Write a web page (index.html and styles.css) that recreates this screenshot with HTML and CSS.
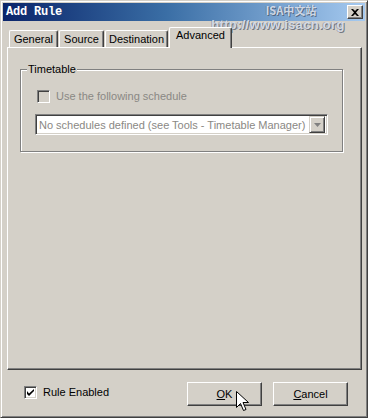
FILE: index.html
```html
<!DOCTYPE html>
<html>
	<head>
		<meta charset="UTF-8">
		<title>Add Rule</title>
		<link rel="stylesheet" href="styles.css">
	</head>
	<body>
		<div class="window">
			<div class="titlebar">
				<span class="title">Add Rule</span>
				<span class="close">
					<svg width="8" height="7" viewBox="0 0 8 7"><path d="M0 0h2l2 2 2-2h2L5 3.5 8 7H6L4 5 2 7H0l3-3.5z" fill="#000"/></svg>
				</span>
			</div>
			<div class="body">
				<div class="tabs">
					<div class="tab tab-general">General</div>
					<div class="tab tab-source">Source</div>
					<div class="tab tab-dest">Destination</div>
					<div class="tab tab-adv active">Advanced</div>
				</div>
				<div class="panel">
					<div class="group">
						<span class="legend">Timetable</span>
						<div class="check disabled">
							<span class="box"></span>
							<span>Use the following schedule</span>
						</div>
						<div class="combo">
							<span class="combo-text">No schedules defined (see Tools - Timetable Manager)</span>
							<span class="combo-btn">
								<svg width="7" height="4" viewBox="0 0 7 4"><path d="M0 0h7L3.5 4z" fill="#808080"/></svg>
							</span>
						</div>
					</div>
				</div>
				<div class="footer">
					<div class="check">
						<span class="box on">
							<svg width="7" height="7" viewBox="0 0 7 7"><path d="M0 2v3l2 2 5-5V0L2 4.5z" fill="#000"/></svg>
						</span>
						<span>Rule Enabled</span>
					</div>
					<div class="buttons">
						<button class="btn"><u>O</u>K</button>
						<button class="btn"><u>C</u>ancel</button>
					</div>
				</div>
			</div>
			<div class="watermark">
				<span class="wm-top">ISA中文站</span>
				<span class="wm-url">http://www.isacn.org</span>
			</div>
			<svg class="cursor" width="13" height="21" viewBox="0 0 13 21">
				<path d="M0.5 0.5v16l4-4 3 7 2.5-1-3-7h5.5z" fill="#fff" stroke="#000" stroke-width="1"/>
			</svg>
		</div>
	</body>
</html>
```

FILE: styles.css
```css
* {
	margin:0;
	padding:0;
	box-sizing:border-box;
}
body {
	font-family:"Liberation Sans", Arial, sans-serif;
	font-size:11px;
	color:#000;
	background:#d4d0c8;
}
.window {
	position:relative;
	width:368px;
	height:418px;
	background:#d4d0c8;
	border:1px solid;
	border-color:#d4d0c8 #404040 #404040 #d4d0c8;
	box-shadow:inset 1px 1px 0 #fff, inset -1px -1px 0 #808080;
	padding:2px;
	display:flex;
	flex-direction:column;
	overflow:hidden;
}
	.titlebar {
		height:18px;
		background:linear-gradient(to right, #0a246a, #3a6ea5 45%, #a6caf0);
		display:flex;
		align-items:center;
		justify-content:space-between;
		padding:0 2px 0 3px;
	}
		.title {
			font-family:"Liberation Mono", "Courier New", monospace;
			font-weight:bold;
			font-size:12px;
			color:#fff;
			letter-spacing:-0.2px;
		}
		.close {
			width:16px;
			height:14px;
			background:#d4d0c8;
			border:1px solid;
			border-color:#fff #404040 #404040 #fff;
			box-shadow:inset -1px -1px 0 #808080;
			display:flex;
			align-items:center;
			justify-content:center;
		}
	.body {
		flex:1;
		display:flex;
		flex-direction:column;
		padding:0 3px 0 4px;
	}
		.tabs {
			margin-top:6px;
			height:20px;
			display:flex;
			align-items:flex-end;
			padding-left:2px;
			position:relative;
			z-index:1;
		}
			.tab {
				height:17px;
				border-top:1px solid #fff;
				border-left:1px solid #fff;
				border-right:1px solid #404040;
				border-radius:2px 2px 0 0;
				box-shadow:inset -1px 0 0 #808080;
				text-align:center;
				line-height:15px;
				padding-top:1px;
			}
			.tab-general {
				width:49px;
			}
			.tab-source {
				width:45px;
				margin-left:1px;
			}
			.tab-dest {
				width:63px;
				margin-left:1px;
			}
			.tab-adv {
				width:63px;
				margin-left:1px;
			}
			.tab.active {
				height:21px;
				margin-bottom:-1px;
				background:#d4d0c8;
				line-height:15px;
				padding-top:0;
			}
		.panel {
			height:323px;
			border:1px solid;
			border-color:#fff #404040 #404040 #fff;
			box-shadow:inset -1px -1px 0 #808080;
			padding:21px 0 0 12px;
		}
			.group {
				position:relative;
				width:323px;
				height:83px;
				border:1px solid #808080;
				box-shadow:inset 1px 1px 0 #fff, 1px 1px 0 #fff;
				padding:20px 0 0 16px;
			}
				.legend {
					position:absolute;
					top:-8px;
					left:6px;
					padding:0 1px;
					background:#d4d0c8;
					line-height:14px;
				}
				.combo {
					margin:11px 0 0 -2px;
					width:293px;
					height:21px;
					display:flex;
					align-items:center;
					justify-content:space-between;
					background:#fff;
					border:1px solid;
					border-color:#808080 #fff #fff #808080;
					box-shadow:inset 1px 1px 0 #404040, inset -1px -1px 0 #d4d0c8;
					padding:0 2px 0 3px;
				}
					.combo-text {
						color:#8a8884;
					}
					.combo-btn {
						width:16px;
						height:17px;
						background:#d4d0c8;
						border:1px solid;
						border-color:#d4d0c8 #404040 #404040 #d4d0c8;
						box-shadow:inset 1px 1px 0 #fff, inset -1px -1px 0 #808080;
						display:flex;
						align-items:center;
						justify-content:center;
					}
		.check {
			display:flex;
			align-items:center;
			gap:6px;
			line-height:13px;
		}
			.box {
				width:13px;
				height:13px;
				background:#fff;
				border:1px solid;
				border-color:#808080 #fff #fff #808080;
				box-shadow:inset 1px 1px 0 #404040, inset -1px -1px 0 #d4d0c8;
				display:flex;
				align-items:center;
				justify-content:center;
			}
			.check.disabled {
				color:#8a8884;
			}
				.check.disabled .box {
					background:#d4d0c8;
				}
		.footer {
			height:43px;
			display:flex;
			align-items:flex-start;
			justify-content:space-between;
			padding:12px 14px 0 17px;
		}
			.footer .check {
				margin-top:4px;
			}
			.buttons {
				display:flex;
				gap:11px;
			}
				.btn {
					width:75px;
					height:24px;
					font:inherit;
					color:#000;
					background:#d4d0c8;
					border:1px solid;
					border-color:#fff #404040 #404040 #fff;
					box-shadow:inset -1px -1px 0 #808080;
				}
	.watermark {
		position:absolute;
		top:2px;
		left:210px;
		width:134px;
		display:flex;
		flex-direction:column;
		align-items:center;
		font-weight:bold;
		color:rgba(220,226,238,0.9);
		text-shadow:1px 1px 0 rgba(60,70,90,0.65), -1px 0 0 rgba(90,100,120,0.4);
	}
		.wm-top {
			margin-left:26px;
			font-family:"Noto Sans CJK SC", "Liberation Sans", sans-serif;
			font-size:11px;
			line-height:15px;
		}
		.wm-url {
			font-family:"Liberation Sans", Arial, sans-serif;
			font-size:13px;
			line-height:14px;
			letter-spacing:0.3px;
		}
	.cursor {
		position:absolute;
		left:235px;
		top:390px;
	}
```
